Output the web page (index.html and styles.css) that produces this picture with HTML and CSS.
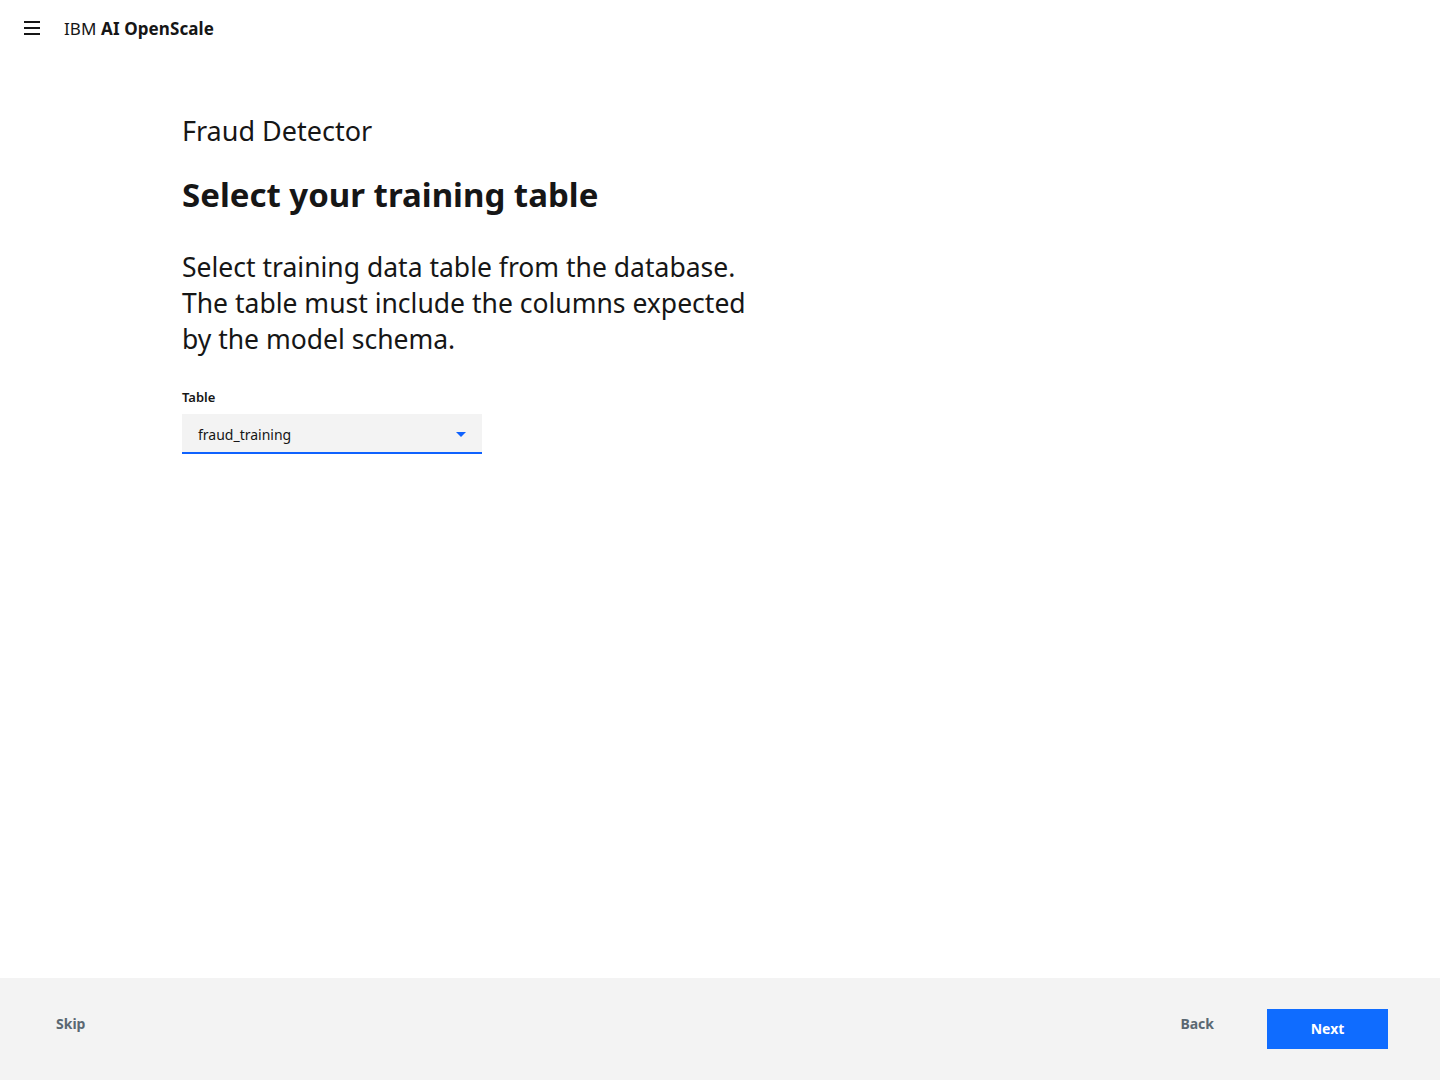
FILE: index.html
```html
<!DOCTYPE html>
<html>
<head>
<meta charset="utf-8">
<link rel="stylesheet" href="styles.css">
</head>
<body>
<div class="app">
  <header class="topbar">
    <button class="menu" aria-label="Menu">
      <svg width="16" height="14" viewBox="0 0 16 14"><rect x="0" y="0" width="16" height="2" fill="#161616"/><rect x="0" y="6" width="16" height="2" fill="#161616"/><rect x="0" y="12" width="16" height="2" fill="#161616"/></svg>
    </button>
    <div class="brand">IBM <b>AI OpenScale</b></div>
  </header>
  <main class="content">
    <div class="eyebrow">Fraud Detector</div>
    <h1 class="title">Select your training table</h1>
    <p class="lead">Select training data table from the database. The table must include the columns expected by the model schema.</p>
    <div class="field">
      <label class="label">Table</label>
      <div class="select">
        <span class="value">fraud_training</span>
        <svg class="caret" width="10" height="5" viewBox="0 0 10 5"><path d="M0 0 L10 0 L5 5 Z" fill="#0f62fe"/></svg>
      </div>
    </div>
  </main>
  <footer class="footer">
    <button class="ghost skip">Skip</button>
    <div class="actions">
      <button class="ghost back">Back</button>
      <button class="primary">Next</button>
    </div>
  </footer>
</div>
</body>
</html>
```
FILE: styles.css
```css
* { box-sizing: border-box; }
html, body { margin: 0; padding: 0; }
body {
  font-family: "Noto Sans", "Open Sans", sans-serif;
  color: #161616;
  background: #fff;
}
.app {
  height: 1080px;
  display: flex;
  flex-direction: column;
}
.topbar {
  height: 56px;
  display: flex;
  align-items: center;
  padding-left: 24px;
}
.menu {
  border: 0;
  background: none;
  padding: 0;
  width: 16px;
  height: 14px;
  display: flex;
  margin-right: 24px;
}
.brand {
  font-size: 17px;
  letter-spacing: 0.1px;
}
.brand b { font-weight: 700; }
.content {
  flex: 1;
  padding: 57px 0 0 182px;
}
.eyebrow {
  font-size: 27px;
  font-weight: 400;
  line-height: 36px;
}
.title {
  margin: 26px 0 0;
  font-size: 33px;
  font-weight: 700;
  line-height: 40px;
}
.lead {
  margin: 34px 0 0;
  width: 590px;
  font-size: 26.5px;
  line-height: 36px;
  font-weight: 400;
}
.field { margin-top: 31px; }
.label {
  display: block;
  font-size: 13px;
  font-weight: 600;
  color: #161616;
  line-height: 18px;
  margin-bottom: 8px;
}
.select {
  width: 300px;
  height: 40px;
  background: #f3f3f3;
  border-bottom: 2px solid #0f62fe;
  display: flex;
  align-items: center;
  justify-content: space-between;
  padding: 2px 16px 0 16px;
}
.value { font-size: 14px; }
.caret { margin-right: 0; }
.footer {
  height: 102px;
  background: #f3f3f3;
  display: flex;
  align-items: center;
  justify-content: space-between;
  padding: 0 52px 0 56px;
}
.ghost {
  border: 0;
  background: none;
  padding: 0;
  font-family: inherit;
  font-size: 14px;
  font-weight: 700;
  color: #5a6872;
}
.skip { margin-top: -11px; }
.actions { display: flex; align-items: center; }
.back { margin-right: 53px; margin-top: -11px; }
.primary {
  width: 121px;
  height: 40px;
  border: 0;
  background: #0f6cff;
  color: #fff;
  font-family: inherit;
  font-size: 14px;
  font-weight: 700;
  padding: 0 0 2px;
}
```
